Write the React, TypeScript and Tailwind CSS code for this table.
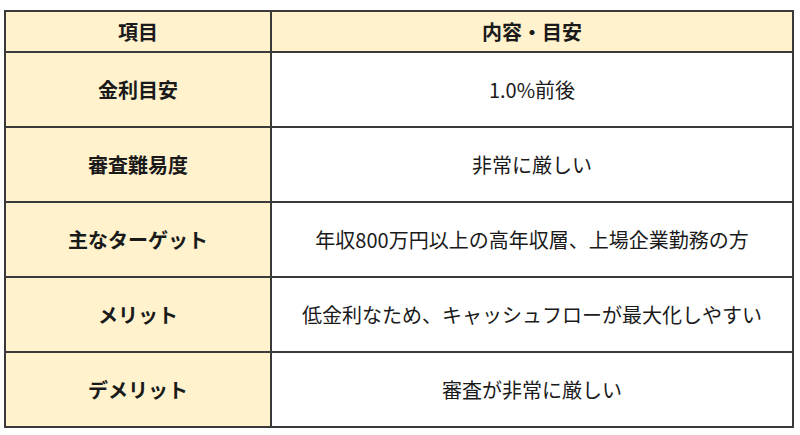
import React from "react";

const rows: [string, string][] = [
  ["金利目安", "1.0%前後"],
  ["審査難易度", "非常に厳しい"],
  ["主なターゲット", "年収800万円以上の高年収層、上場企業勤務の方"],
  ["メリット", "低金利なため、キャッシュフローが最大化しやすい"],
  ["デメリット", "審査が非常に厳しい"],
];

export default function App() {
  return (
    <div
      className="w-[800px] h-[435px] bg-white pt-[10px] pl-[4px]"
      style={{ fontFamily: '"Noto Sans CJK JP", "Noto Sans", sans-serif' }}
    >
      <table className="border-collapse text-[20px] text-[#1a1a1a]">
        <thead>
          <tr className="h-[41px]">
            <th className="w-[266px] bg-[#fff2cc] border-2 border-[#3a3a3a] font-bold text-center p-0">
              項目
            </th>
            <th className="w-[522px] bg-[#fff2cc] border-2 border-[#3a3a3a] font-bold text-center p-0">
              内容・目安
            </th>
          </tr>
        </thead>
        <tbody>
          {rows.map(([k, v]) => (
            <tr key={k} className="h-[75px]">
              <td className="bg-[#fff2cc] border-2 border-[#3a3a3a] font-bold text-center p-0">
                {k}
              </td>
              <td className="bg-white border-2 border-[#3a3a3a] text-center p-0">
                {v}
              </td>
            </tr>
          ))}
        </tbody>
      </table>
    </div>
  );
}
